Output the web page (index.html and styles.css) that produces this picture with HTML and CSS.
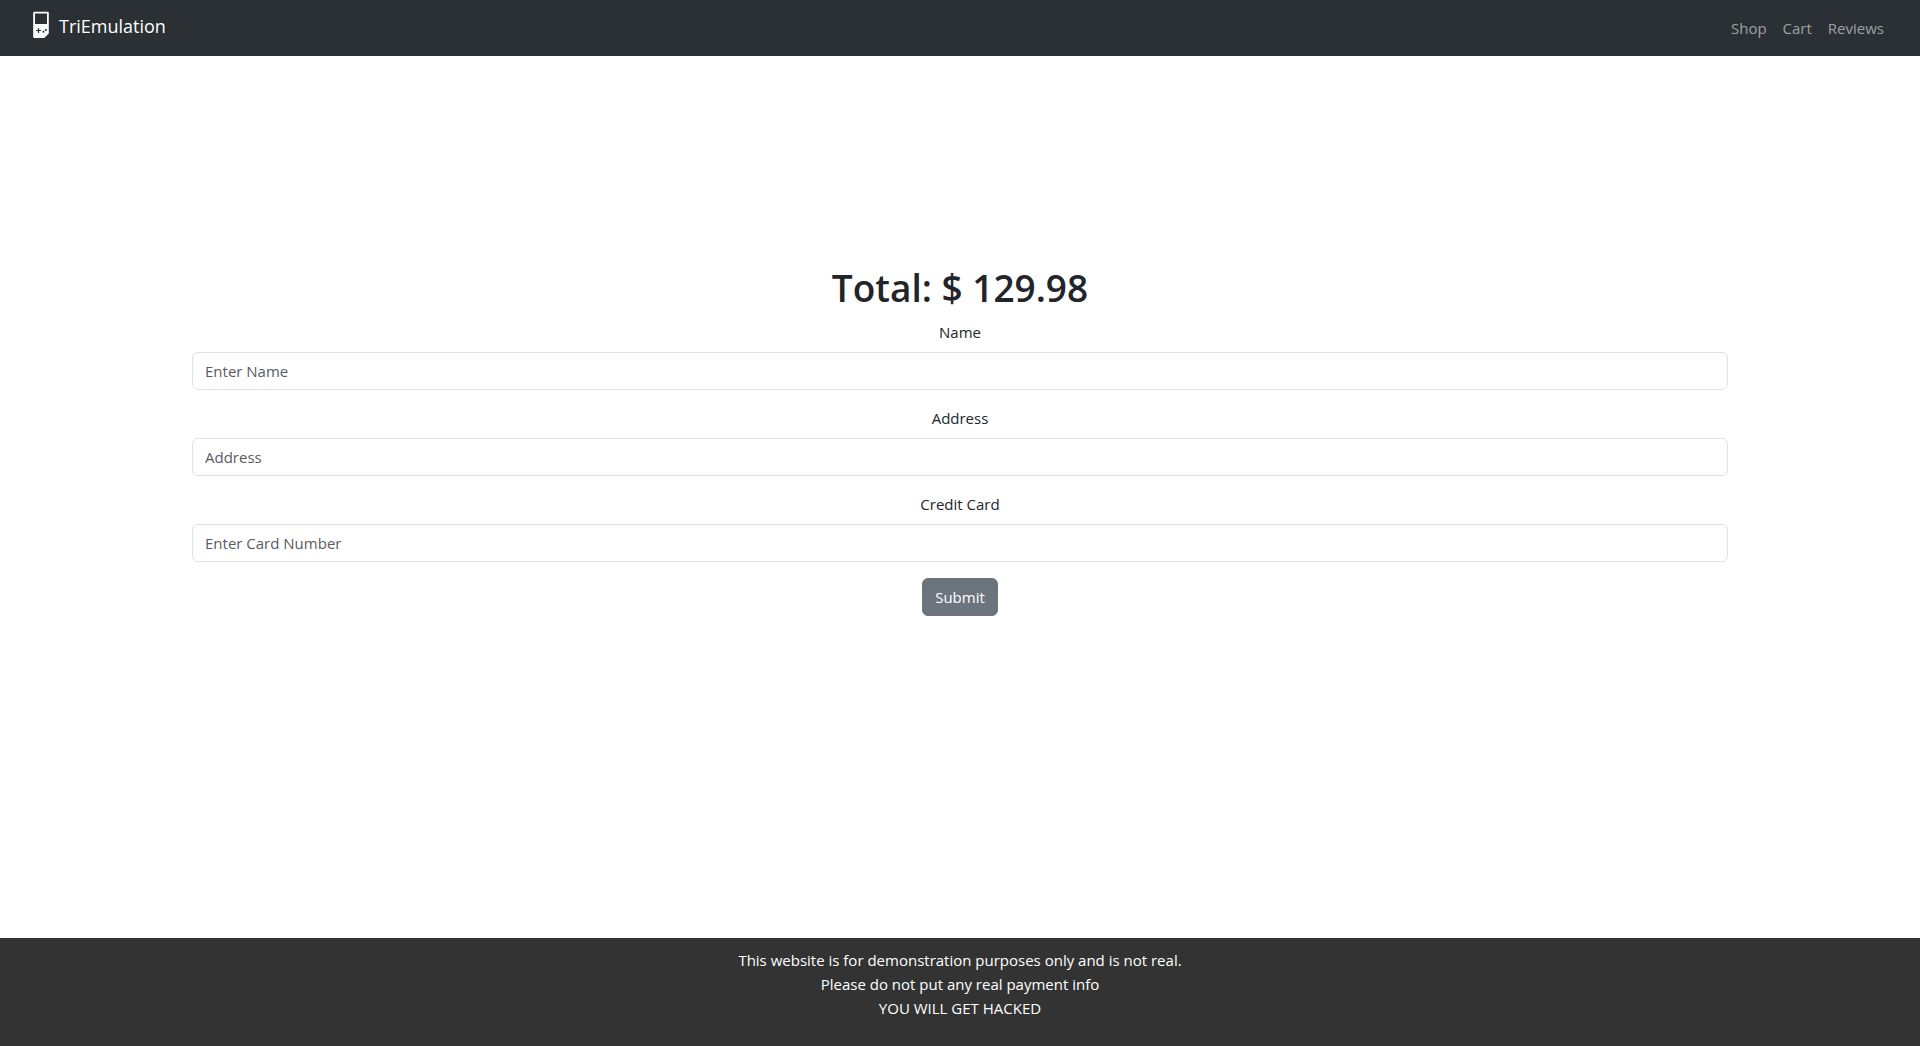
FILE: index.html
```html
<!DOCTYPE html>
<html lang="en">
<head>
  <meta charset="utf-8">
  <meta name="viewport" content="width=device-width, initial-scale=1">
  <title>TriEmulation</title>
  <link rel="stylesheet" href="styles.css">
</head>
<body>
  <nav class="navbar">
    <a class="brand" href="#">
      <svg class="brand-icon" width="18" height="28" viewBox="0 0 18 28" aria-hidden="true">
        <path fill="#fff" fill-rule="evenodd" d="M2.500 .7h13q1.300 0 1.300 1.300v20.500l-4.600 4.600H2.500q-1.300 0-1.300-1.300V2q0-1.300 1.300-1.300zM3 2.500v10.500h12V2.500z"/>
        <path stroke="#2b3035" stroke-width="1.2" d="M4 19.500h5M6.500 17v5"/>
        <circle cx="11.500" cy="20.700" r="1" fill="#2b3035"/>
        <circle cx="13.900" cy="19" r="1" fill="#2b3035"/>
      </svg>
      <span>TriEmulation</span>
    </a>
    <div class="nav-links">
      <a class="nav-link" href="#">Shop</a>
      <a class="nav-link" href="#">Cart</a>
      <a class="nav-link" href="#">Reviews</a>
    </div>
  </nav>
  <main class="checkout">
    <h1 class="total">Total: $ 129.98</h1>
    <form class="form">
      <div class="field">
        <label for="name">Name</label>
        <input class="control" id="name" type="text" placeholder="Enter Name">
      </div>
      <div class="field">
        <label for="address">Address</label>
        <input class="control" id="address" type="text" placeholder="Address">
      </div>
      <div class="field">
        <label for="card">Credit Card</label>
        <input class="control" id="card" type="text" placeholder="Enter Card Number">
      </div>
      <button class="submit" type="submit">Submit</button>
    </form>
  </main>
  <footer class="footer">
    <p>This website is for demonstration purposes only and is not real.<br>Please do not put any real payment info<br>YOU WILL GET HACKED</p>
  </footer>
</body>
</html>
```
FILE: styles.css
```css
* {
  box-sizing: border-box;
}

body {
  display: flex;
  flex-direction: column;
  min-height: 100vh;
  margin: 0;
  background: #fff;
  color: #212529;
  font-family: "Segoe UI", "Open Sans", "Noto Sans", sans-serif;
  font-size: 15px;
  line-height: 24px;
}

.navbar {
  display: flex;
  align-items: center;
  justify-content: space-between;
  height: 56px;
  padding: 0 36px 0 32px;
  background: #2b3035;
}

.brand {
  display: flex;
  align-items: flex-start;
  gap: 9px;
  padding-bottom: 4px;
  color: #fff;
  font-size: 18px;
  line-height: 30px;
  text-decoration: none;
}

.nav-links {
  display: flex;
  gap: 16px;
}

.nav-link {
  color: #9fa2a4;
  text-decoration: none;
}

.checkout {
  flex: 1;
  width: 80%;
  margin: 0 auto;
  padding: 208px 0 64px;
  text-align: center;
}

.total {
  margin: 0 0 8px;
  font-size: 37px;
  font-weight: 600;
  line-height: 48px;
}

.field {
  display: flex;
  flex-direction: column;
  align-items: center;
  gap: 8px;
  margin-bottom: 16px;
}

.control {
  width: 100%;
  height: 38px;
  padding: 6px 12px;
  border: 1px solid #dee2e6;
  border-radius: 6px;
  background: #fff;
  color: #212529;
  font: inherit;
}

.control::placeholder {
  color: #595c5f;
  opacity: 1;
}

.submit {
  height: 38px;
  padding: 6px 12px;
  border: 1px solid #6c757d;
  border-radius: 6px;
  background: #6c757d;
  color: #fff;
  font: inherit;
}

.footer {
  padding: 10px;
  background: #333;
  color: #fff;
  text-align: center;
}

.footer p {
  margin: 0 0 16px;
}
```
